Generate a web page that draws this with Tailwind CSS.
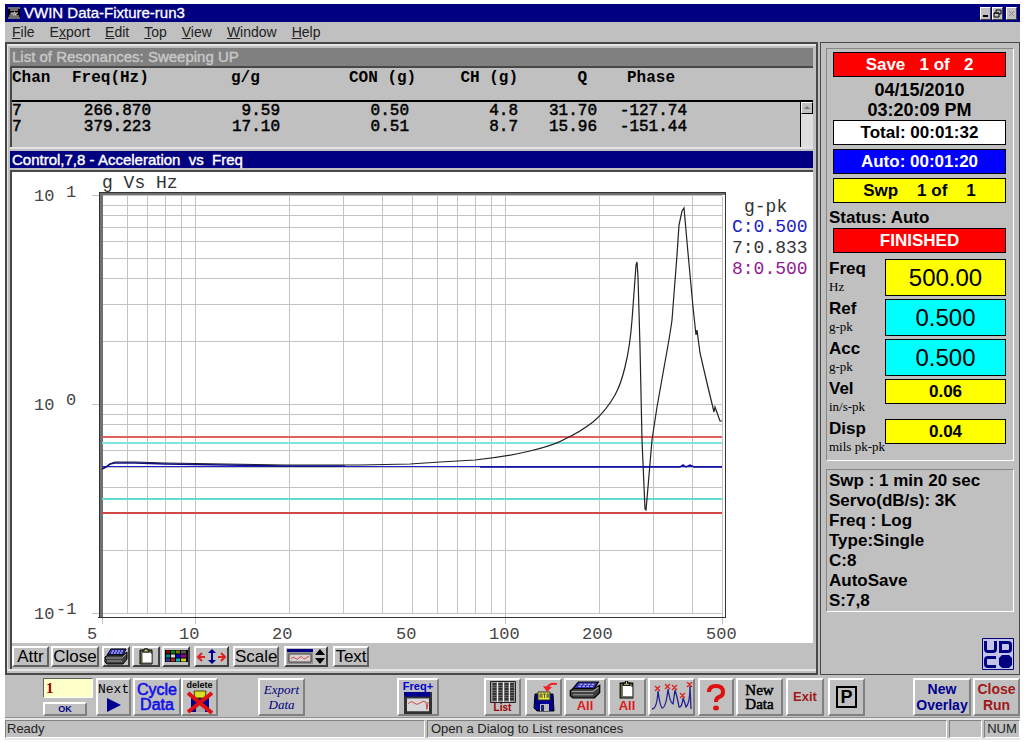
<!DOCTYPE html>
<html lang="en">
<head>
<meta charset="utf-8">
<title>VWIN Data-Fixture-run3</title>
<script src="https://cdn.jsdelivr.net/npm/@tailwindcss/browser@4"></script>
</head>
<body class="bg-white pt-1 pl-[5px] pr-1 font-['Liberation_Sans',sans-serif] text-black">
<svg class="hidden" aria-hidden="true">
  <symbol id="printer" viewBox="0 0 24 17">
    <path d="M7 1h15l-3 6H3z" fill="#3030b0" stroke="#000"/>
    <path d="M8 3h11M7 5h11" stroke="#d0d0ff" stroke-dasharray="2 1"/>
    <path d="M1 9l3-2h15l4-3v7l-4 5H3l-2-2z" fill="#404040" stroke="#000"/>
    <path d="M2 10h16l4-4M3 13h15" fill="none" stroke="#a0a0a0"/>
  </symbol>
  <symbol id="clip" viewBox="0 0 15 17">
    <path d="M1 2h12v14H1z" fill="#707030" stroke="#000"/>
    <path d="M3 4h8l2 2v9H3z" fill="#fff" stroke="#555"/>
    <path d="M4 4V2h2V0h2v2h2v2z" fill="#d0d090" stroke="#000"/>
  </symbol>
</svg>

<div class="bg-[#c0c0c0]">
  <header class="flex h-[18px] items-center bg-[#000080] pl-[3px] pr-[3px] text-white">
    <svg class="h-3 w-3 shrink-0" viewBox="0 0 12 12" aria-hidden="true"><path fill="#000" d="M0 0h12v12H0z"/><path d="M0 1h12M2 3h8M1 9h10M0 11h12" stroke="#ddd"/><path d="M3 8V6h2v2h1V5h1v3h1V6h2" fill="none" stroke="#ddd"/></svg>
    <h1 class="ml-1 text-[15px] leading-[18px] [-webkit-text-stroke:0.3px]">VWIN Data-Fixture-run3</h1>
    <div class="ml-auto flex gap-px">
      <button aria-label="Minimize" class="h-[13px] w-[11px] border border-b-[#404040] border-l-white border-r-[#404040] border-t-white bg-[#c0c0c0]"><svg class="block" viewBox="0 0 9 11"><path d="M2 8h5" stroke="#000" stroke-width="2"/></svg></button>
      <button aria-label="Restore" class="h-[13px] w-[11px] border border-b-[#404040] border-l-white border-r-[#404040] border-t-white bg-[#c0c0c0]"><svg class="block" viewBox="0 0 9 11"><path d="M3 4V2h5v4H6M1 5h5v4H1zM1 5h5" fill="none" stroke="#000"/></svg></button>
      <button aria-label="Close" class="ml-0.5 h-[13px] w-[11px] border border-b-[#404040] border-l-white border-r-[#404040] border-t-white bg-[#c0c0c0]"><svg class="block" viewBox="0 0 9 11"><path d="M2 3l5 5M7 3l-5 5" stroke="#888"/></svg></button>
    </div>
  </header>

  <nav class="flex h-5 items-center gap-[15px] pl-[7px] text-[14px] leading-5 text-[#222]">
    <button><u>F</u>ile</button><button>E<u>x</u>port</button><button><u>E</u>dit</button><button><u>T</u>op</button><button><u>V</u>iew</button><button><u>W</u>indow</button><button><u>H</u>elp</button>
  </nav>

  <main class="flex gap-0.5">
    <div class="min-w-0 flex-1 border-2 border-[#484848] pb-0.5">
      <div class="border-b-2 border-l border-t-2 border-[#e4e4e4] pl-0.5 pr-[3px] pt-0.5">
        <section>
          <h2 class="bg-[#808080] pl-0.5 text-[15px] leading-[18px] text-[#c8c8c8] [-webkit-text-stroke:0.4px]">List of Resonances: Sweeping UP</h2>
          <div class="relative h-[81px] border-l-2 border-t-2 border-[#484848]">
            <table class="w-full table-fixed border-collapse whitespace-pre text-right font-['Liberation_Mono',monospace] text-[16px] leading-4">
              <colgroup><col class="w-[60px]"><col class="w-[79px]"><col class="w-[129px]"><col class="w-[140px]"><col class="w-[98px]"><col class="w-[79px]"><col class="w-[90px]"><col></colgroup>
              <thead class="border-b-2 border-black"><tr class="h-[33px] align-top">
                <th class="pt-0.5 text-left">Chan</th><th class="pt-0.5 text-left">Freq(Hz)</th><th class="pl-20 pt-0.5 text-left">g/g</th><th class="pl-[69px] pt-0.5 text-left">CON (g)</th><th class="pt-0.5">CH (g)</th><th class="pr-2.5 pt-0.5">Q</th><th class="pl-[30px] pt-0.5 text-left">Phase</th><th></th>
              </tr></thead>
              <tbody class="[-webkit-text-stroke:0.5px]">
                <tr><td class="pt-px text-left">7</td><td class="pt-px">266.870</td><td class="pt-px">9.59</td><td class="pr-[11px] pt-px">0.50</td><td class="pt-px">4.8</td><td class="pt-px">31.70</td><td class="pt-px">-127.74</td><td></td></tr>
                <tr><td class="text-left">7</td><td>379.223</td><td>17.10</td><td class="pr-[11px]">0.51</td><td>8.7</td><td>15.96</td><td>-151.44</td><td></td></tr>
              </tbody>
            </table>
            <div class="absolute bottom-0 right-0 top-[34px] w-[13px] border-l border-black bg-[#dedede]">
              <button aria-label="Scroll up" class="block h-3 w-3 border border-b-black border-l-white border-r-black border-t-white bg-[#c0c0c0]"><svg viewBox="0 0 10 10"><path d="M2 6l3-3 3 3z" fill="#777"/></svg></button>
            </div>
          </div>
        </section>

        <section class="border-t-2 border-[#e4e4e4] pt-0.5">
          <h2 class="whitespace-pre bg-[#000080] pl-0.5 text-[15px] leading-[17px] text-white [-webkit-text-stroke:0.4px]">Control,7,8 - Acceleration  vs  Freq</h2>
          <div class="mt-0.5 border-l-2 border-t-2 border-[#484848]">
            <svg class="block w-full bg-white font-['Liberation_Mono',monospace]" viewBox="12 172 801 471" role="img" aria-label="Acceleration versus frequency">
              <g id="grid" stroke="#c4c4c4" stroke-width="1" shape-rendering="crispEdges"></g>
              <path d="M100 193h625v2H100z" fill="#707070"/><path d="M99 193h4v424h-4z" fill="#707070"/>
              <path d="M99.500 617V192.500H725.500V617.500H99z" fill="none" stroke="#333" shape-rendering="crispEdges"/>
              <path d="M102 436h620v2H102z" fill="#e06060"/>
              <path d="M102 442h620v2H102z" fill="#80e4e0"/>
              <path d="M102 498h620v2H102z" fill="#60dcd4"/>
              <path d="M102 512h620v2H102z" fill="#d04848"/>
              <path d="M102 466h620v1H102z" fill="#2020d0"/>
              <path d="M102 469l4-2 4-3 5-2h20l30 1 60 1 60 1L360 465 410 464 440 462 475 460Q505 457 530 451T565 439Q580 432 593 422 606 411 615 395 621 384 625 367 630 347 632 320L634 293 636 265 637 262 638 277 640 347 642 440 645 509 646 510 648 487 652 440 657 407 665 362Q670 335 672 320L677 255 679 225 682 211 684 208 688 253 693 307 696 335 697 330 700 353 707 383 714 412 715 407 720 421H722" fill="none" stroke="#222" stroke-width="1.200"/>
              <path d="M102 469l4-2 4-3 5-1h20l30 1 60 1 60 1H345" fill="none" stroke="#101080" stroke-width="1.500"/>
              <path d="M480 467h200l3-2 3 2 4-2 4 2h28" fill="none" stroke="#1010a0" stroke-width="1.500"/>
              <g fill="#444" font-size="17">
                <text x="34" y="201">10</text><text x="66" y="197">1</text>
                <text x="34" y="410">10</text><text x="66" y="405">0</text>
                <text x="34" y="619">10</text><text x="56" y="614">-1</text>
                <text x="87" y="639">5</text><text x="179" y="639">10</text><text x="272" y="639">20</text><text x="396" y="639">50</text><text x="489" y="639">100</text><text x="582" y="639">200</text><text x="706" y="639">500</text>
              </g>
              <g fill="#333" font-size="18">
                <text x="102" y="188">g Vs Hz</text><text x="744" y="212">g-pk</text>
                <text x="732" y="232" fill="#2020c8">C:0.500</text><text x="732" y="253">7:0.833</text><text x="732" y="274" fill="#902090">8:0.500</text>
              </g>
            </svg>
          </div>
        </section>

        <div class="flex h-[26px] items-center border-l-2 border-[#484848] text-[17px] leading-5">
          <button class="h-[21px] w-[37px] border-2 border-b-[#606060] border-l-white border-r-[#606060] border-t-white leading-[17px]">Attr</button>
          <button class="ml-0.5 h-[21px] w-12 border-2 border-b-[#606060] border-l-white border-r-[#606060] border-t-white leading-[17px]">Close</button>
          <button aria-label="Print" class="ml-[3px] flex h-[21px] w-7 items-center justify-center border-2 border-b-[#404040] border-l-white border-r-[#404040] border-t-white"><svg class="h-[17px] w-6"><use href="#printer"/></svg></button>
          <button aria-label="Copy" class="ml-0.5 flex h-[21px] w-7 items-center justify-center border-2 border-b-[#404040] border-l-white border-r-[#404040] border-t-white"><svg class="h-[17px] w-[15px]"><use href="#clip"/></svg></button>
          <button aria-label="Colors" class="ml-0.5 flex h-[21px] w-7 items-center justify-center border-2 border-b-[#404040] border-l-white border-r-[#404040] border-t-white"><svg class="h-3 w-[23px]" viewBox="0 0 23 12"><path d="M0 0h23v12H0z"/><g stroke-width="3"><path d="M1 2h4" stroke="#800"/><path d="M6 2h4" stroke="#080"/><path d="M11 2h4" stroke="#770"/><path d="M16 2h5" stroke="#555"/><path d="M1 6h4" stroke="#088"/><path d="M6 6h4" stroke="#ddd"/><path d="M11 6h4" stroke="#00d"/><path d="M16 6h5" stroke="#909"/><path d="M1 10h4" stroke="#339"/><path d="M6 10h4" stroke="#a22"/><path d="M11 10h4" stroke="#0bb"/><path d="M16 10h5" stroke="#cc2"/></g></svg></button>
          <button aria-label="Pan" class="ml-1 flex h-[21px] w-[35px] items-center justify-center border-2 border-b-[#404040] border-l-white border-r-[#404040] border-t-white"><svg class="h-[17px] w-[29px]" viewBox="0 0 29 17"><path d="M1 9h7M5 5L1 9l4 4M28 9h-7M24 5l4 4-4 4" fill="none" stroke="#d22" stroke-width="2"/><path d="M15 3v11" stroke="#000090" stroke-width="2"/><path d="M11 5l4-4 4 4zM11 12l4 4 4-4z" fill="#000090"/></svg></button>
          <button class="ml-1 h-[21px] w-[46px] border-2 border-b-[#606060] border-l-white border-r-[#606060] border-t-white leading-[17px]">Scale</button>
          <button aria-label="Graph type" class="ml-[5px] flex h-[21px] w-11 items-center justify-center border-2 border-b-[#404040] border-l-white border-r-[#404040] border-t-white"><svg class="h-[17px] w-10" viewBox="0 0 40 17"><path d="M1 1h26v15H1z" fill="#909090"/><path d="M1 1h26v3H1z" fill="#000080"/><path d="M3 6h22v8H3z" fill="#d8d0d0" stroke="#444"/><path d="M5 11c3-5 5 3 8-1s4 3 7 0l3-2" fill="none" stroke="#d44"/><path d="M29 7l5-6 5 6zM29 10h10l-5 6z"/></svg></button>
          <button class="ml-[5px] h-[21px] w-9 border-2 border-b-[#606060] border-l-white border-r-[#606060] border-t-white leading-[17px]">Text</button>
        </div>
      </div>
    </div>

    <aside class="flex w-[200px] shrink-0 flex-col border border-[#484848] px-[5px] pb-1 pt-[5px] text-[17px] font-bold leading-5">
      <section class="border border-b-white border-l-[#888] border-r-white border-t-[#888] pb-1 pl-0.5 pr-[7px] pt-[3px]">
        <div class="ml-1 text-center">
          <p class="h-[25px] whitespace-pre border border-black bg-[#ff0000] leading-[23px] text-white">Save   1 of   2</p>
          <p class="mt-[3px] text-[18px]">04/15/2010</p>
          <p class="text-[18px]">03:20:09 PM</p>
          <p class="h-[25px] border border-black bg-white leading-[23px]">Total: 00:01:32</p>
          <p class="mt-1 h-[25px] border border-black bg-[#0000ff] leading-[23px] text-white">Auto: 00:01:20</p>
          <p class="mt-1 h-[25px] whitespace-pre border border-black bg-[#ffff00] leading-[23px]">Swp    1 of    1</p>
        </div>
        <p class="mt-[5px]">Status: Auto</p>
        <p class="ml-1 h-[25px] border border-black bg-[#ff0000] text-center leading-[23px] text-white">FINISHED</p>
        <dl class="mt-1.5 grid grid-cols-[56px_1fr] gap-y-[3px] [&>dt]:h-[37px] [&>dt]:leading-5">
          <dt class="whitespace-nowrap">Freq<small class="block font-['Liberation_Serif',serif] text-[13px] font-normal leading-4">Hz</small></dt><dd class="h-[37px] border border-black bg-[#ffff00] text-center text-[24px] font-normal leading-9">500.00</dd>
          <dt class="whitespace-nowrap">Ref<small class="block font-['Liberation_Serif',serif] text-[13px] font-normal leading-4">g-pk</small></dt><dd class="h-[37px] border border-black bg-[#00ffff] text-center text-[24px] font-normal leading-9">0.500</dd>
          <dt class="whitespace-nowrap">Acc<small class="block font-['Liberation_Serif',serif] text-[13px] font-normal leading-4">g-pk</small></dt><dd class="h-[37px] border border-black bg-[#00ffff] text-center text-[24px] font-normal leading-9">0.500</dd>
          <dt class="whitespace-nowrap">Vel<small class="block font-['Liberation_Serif',serif] text-[13px] font-normal leading-4">in/s-pk</small></dt><dd class="h-[25px] border border-black bg-[#ffff00] text-center leading-[23px]">0.06</dd>
          <dt class="whitespace-nowrap">Disp<small class="block font-['Liberation_Serif',serif] text-[13px] font-normal leading-4">mils pk-pk</small></dt><dd class="h-[25px] border border-black bg-[#ffff00] text-center leading-[23px]">0.04</dd>
        </dl>
      </section>
      <section class="mt-2 border border-b-white border-l-[#888] border-r-white border-t-[#888] pl-0.5 pt-px">
        <p>Swp : 1 min 20 sec</p><p>Servo(dB/s): 3K</p><p>Freq : Log</p><p>Type:Single</p><p>C:8</p><p>AutoSave</p><p>S:7,8</p>
      </section>
      <svg class="ml-auto mt-auto h-8 w-8" viewBox="0 0 32 32" role="img" aria-label="UDCO"><path d="M.5.500h31v31H.5z" fill="#c4c4e8" stroke="#000080"/><g fill="none" stroke="#000080" stroke-width="3"><path d="M3.500 3v8q0 2.500 2.500 2.500h5q2.500 0 2.500-2.500V3M18.500 4.500H26q2.500 0 2.500 2.500v4q0 2.500-2.500 2.500h-7.500zM14 19.500H6q-2.500 0-2.500 2.500v4q0 2.500 2.500 2.500h8"/></g><path d="M20 17h7l3 3v7l-3 3h-7l-3-3v-7z" fill="#000080"/></svg>
    </aside>
  </main>

  <div class="flex h-[43px] items-start border-b border-[#909090] pl-[38px] pt-[3px] font-bold [&_button]:border-2 [&_button]:border-b-[#808080] [&_button]:border-l-white [&_button]:border-r-[#808080] [&_button]:border-t-white">
    <form class="w-[50px]"><input aria-label="Run number" value="1" class="block h-5 w-[50px] border border-b-white border-l-[#606060] border-r-white border-t-[#606060] bg-[#ffffc8] pl-0.5 font-['Liberation_Serif',serif] text-[15px] text-[#900]"><button type="button" class="mt-1 block h-3.5 w-11 text-[9px] leading-[10px] text-[#000080]">OK</button></form>
    <button class="ml-[3px] h-[38px] w-[35px] font-['Liberation_Mono',monospace] text-[13px] font-normal leading-4">Next<svg class="mx-auto h-3.5 w-4" viewBox="0 0 16 14"><path d="M1 0l14 7-14 7z" fill="#000090"/></svg></button>
    <button class="ml-0.5 h-[38px] w-12 text-[16px] font-normal leading-[15px] text-[#1010e8] [-webkit-text-stroke:0.6px]">Cycle<br>Data</button>
    <button class="h-[38px] w-[37px] text-[9px] leading-[10px]">delete<svg class="mx-auto h-6 w-7" viewBox="0 0 28 24"><path d="M5 6h18v16H5z" fill="#000090"/><path d="M8 1h12l-1 7H9z" fill="#dd2" stroke="#440"/><path d="M10 15h9v7h-9z" fill="#aaa"/><path d="M2 3l24 20M26 3L2 22" stroke="#e01010" stroke-width="4"/></svg></button>
    <button class="ml-10 h-[38px] w-[47px] font-['Liberation_Serif',serif] text-[13px] font-normal italic leading-[15px] text-[#000080]">Export<br>Data</button>
    <button aria-label="Frequency plus" class="ml-[92px] h-[38px] w-[42px] text-[11px] leading-[11px] text-[#0000d0]">Freq+<svg class="mx-auto h-[22px] w-[30px]" viewBox="0 0 30 24" preserveAspectRatio="none"><path d="M1 0h28v24H1z" fill="#303030"/><path d="M1 0h26v5H1z" fill="#000090"/><path d="M4 7h22v14H4z" fill="#d8d8d8"/><path d="M5 13q3-4 6-1t6 0 6-1l1 8 1-8" fill="none" stroke="#c44"/></svg></button>
    <button class="ml-[45px] h-[38px] w-[37px] text-[10px] leading-[10px] text-[#900]"><svg class="mx-auto h-[22px] w-[26px]" viewBox="0 0 26 22"><path d="M.5.500h25v21H.5z" fill="#999" stroke="#222"/><path d="M4.500 2v18M10.500 2v18M16.500 2v18M22 2v18" stroke="#333" stroke-width="4" stroke-dasharray="2 .500"/><path d="M7.500 1v20M13.500 1v20M19.500 1v20" stroke="#eee"/></svg>List</button>
    <button aria-label="Save data" class="ml-1 h-[38px] w-[37px]"><svg class="mx-auto h-8 w-7" viewBox="0 0 28 32"><path d="M5 13h18l1 17H7l-3-3z" fill="#000090" stroke="#000"/><path d="M8 11h12v8H8z" fill="#ee3" stroke="#333"/><path d="M10 17v-4h2v4M10 15h2M13 13h3M14.500 13v4M17 17v-4h2v4M17 15h2" fill="none" stroke="#554"/><path d="M10 23h9v7h-9z" fill="#bbb"/><path d="M11 24h3v6h-3z" fill="#226"/><path d="M27 3q-9-1-10 5" fill="none" stroke="#e22" stroke-width="2"/><path d="M13 5l4 6 5-5z" fill="#e22"/></svg></button>
    <button class="ml-0.5 h-[38px] w-[42px] text-[13px] leading-[14px] text-[#e01818]"><svg class="mx-auto h-[18px] w-8" viewBox="0 0 24 17" preserveAspectRatio="none"><use href="#printer"/></svg>All</button>
    <button class="ml-0.5 h-[38px] w-[38px] text-[13px] leading-[14px] text-[#e01818]"><svg class="mx-auto h-[18px] w-4"><use href="#clip"/></svg>All</button>
    <button aria-label="Peaks" class="ml-0.5 h-[38px] w-[47px]"><svg class="mx-auto h-[30px] w-[42px]" viewBox="0 0 42 30"><path d="M1 27q5 0 6-18 2 15 4 17 4 0 6-19 2 14 5 15l2-14q3 10 4 17 3 1 4-9 2 5 3 9 4-4 4-21l1 23" fill="none" stroke="#202090" stroke-width="1.300"/><path d="M4 4l5 5M9 4L4 9M14 2l5 5M19 2l-5 5M21 3l5 5M26 3l-5 5M29 11l5 5M34 11l-5 5M36 0l5 5M41 0l-5 5" stroke="#e02020" stroke-width="1.300"/></svg></button>
    <button aria-label="Help" class="ml-[3px] h-[38px] w-9"><svg class="mx-auto h-7 w-5" viewBox="0 0 20 28"><path d="M3 9q0-6 7-6 7 0 7 6 0 4-4 5-3 1-3 5" fill="none" stroke="#e01010" stroke-width="4"/><ellipse cx="10" cy="25" rx="3" ry="2.500" fill="#e01010"/></svg></button>
    <button class="ml-0.5 h-[38px] w-[47px] font-['Liberation_Serif',serif] text-[15px] font-normal leading-[14px] [-webkit-text-stroke:0.5px]"><span class="block h-3.5">New</span><span class="block h-3.5">Data</span></button>
    <button class="ml-[3px] h-[38px] w-[38px] text-[13px] text-[#a01818]">Exit</button>
    <button class="ml-1 flex h-[38px] w-[37px] items-center justify-center text-[18px]"><span class="border-2 border-black px-0.5 leading-[18px]">P</span></button>
    <button class="ml-auto h-[38px] w-[58px] text-[14px] leading-4 text-[#000090]">New<br>Overlay</button>
    <button class="ml-0.5 h-[38px] w-[47px] text-[14px] leading-4 text-[#a01818]">Close<br>Run</button>
  </div>

  <footer class="flex h-[22px] gap-0.5 border-b-2 border-t-2 border-[#e8e8e8] text-[13px] leading-4 text-[#222] [&>p]:border [&>p]:border-b-white [&>p]:border-l-[#808080] [&>p]:border-r-white [&>p]:border-t-[#808080]">
    <p class="w-[420px] pl-px">Ready</p><p class="flex-1 pl-[3px]">Open a Dialog to List resonances</p><p class="w-[33px]"></p><p class="w-9 text-center">NUM</p>
  </footer>
</div>
<script>
  const grid = document.getElementById('grid');
  const line = (x1, y1, x2, y2) => {
    const l = document.createElementNS('http://www.w3.org/2000/svg', 'line');
    Object.entries({ x1, y1, x2, y2 }).forEach(([k, v]) => l.setAttribute(k, v));
    grid.append(l);
  };
  const freqs = [5, 6, 7, 8, 9, 10, 20, 30, 40, 50, 60, 70, 80, 90, 100, 200, 300, 400, 500];
  freqs.forEach(f => {
    const x = Math.round(102 + 310 * Math.log10(f / 5)) + 0.5;
    line(x, 196, x, [5, 10, 100, 500].includes(f) ? 624 : 613);
  });
  [0.1, 1, 10].forEach(d => (d < 10 ? [1, 2, 3, 4, 5, 6, 7, 8, 9] : [1]).forEach(n => {
    const y = Math.round(404 - 209 * Math.log10(d * n)) + 0.5;
    line(n === 1 ? 92 : 102, y, 722, y);
  }));
</script>
</body>
</html>
